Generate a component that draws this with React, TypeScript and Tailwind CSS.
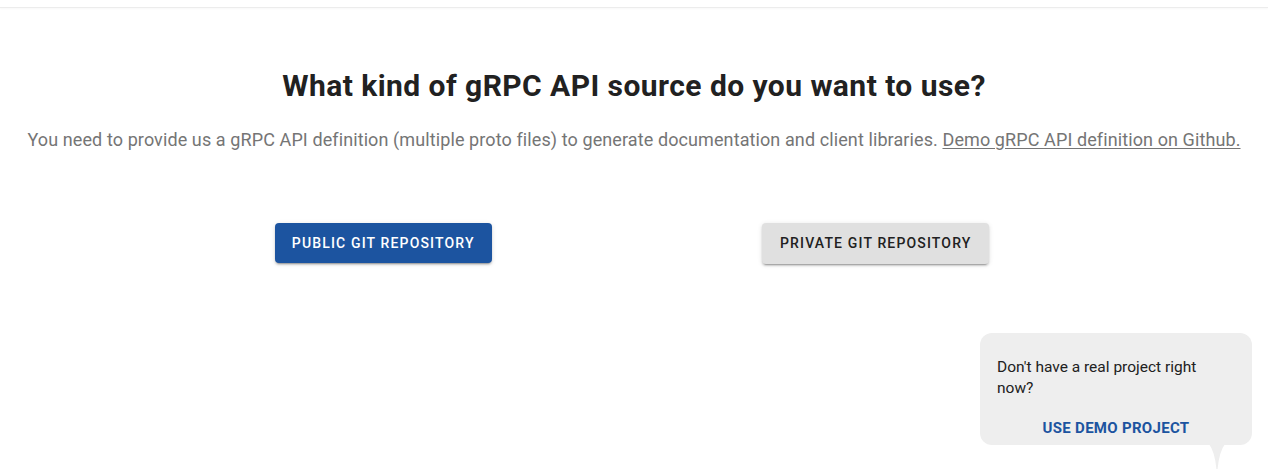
export default function App() {
  return (
    <div className="relative h-[469px] w-[1268px] overflow-hidden bg-white font-['Roboto',sans-serif]">
      {/* top bar edge */}
      <div className="h-[8px] border-b border-[#ececec] shadow-[0_1px_2px_rgba(0,0,0,0.03)]" />

      <div className="pt-[60px] text-center">
        <h1 className="text-[30px] font-bold leading-[36px] tracking-[0.45px] text-[#212121]">What kind of gRPC API source do you want to use?</h1>
        <p className="mt-[22px] text-[18px] leading-[28px] tracking-[0.1px] text-[#757575]">
          You need to provide us a gRPC API definition (multiple proto files) to generate documentation and client libraries.{' '}
          <a href="#" className="underline underline-offset-2">Demo gRPC API definition on Github.</a>
        </p>
      </div>

      <div className="ml-[137px] mt-[69px] grid w-[985px] grid-cols-2">
        <div className="flex justify-center">
          <button className="h-[40px] rounded-[4px] bg-[#1c54a0] px-[17px] text-[14px] font-medium uppercase tracking-[1.15px] text-white shadow-[0_3px_1px_-2px_rgba(0,0,0,0.2),0_2px_2px_0_rgba(0,0,0,0.14),0_1px_5px_0_rgba(0,0,0,0.12)]">
            Public Git Repository
          </button>
        </div>
        <div className="flex justify-center">
          <button className="h-[41px] rounded-[4px] bg-[#e0e0e0] px-[18px] text-[14px] font-medium uppercase tracking-[1.15px] text-[#212121] shadow-[0_3px_1px_-2px_rgba(0,0,0,0.2),0_2px_2px_0_rgba(0,0,0,0.14),0_1px_5px_0_rgba(0,0,0,0.12)]">
            Private Git Repository
          </button>
        </div>
      </div>

      {/* demo project bubble */}
      <div className="absolute left-[980px] top-[333px] h-[112px] w-[272px] rounded-[12px] bg-[#eeeeee] px-[17px] pt-[24px]">
        <p className="w-[225px] text-[15.5px] leading-[21px] text-[#212121]">Don't have a real project right now?</p>
        <button className="mt-[19px] block w-full text-center text-[15px] font-bold uppercase leading-[20px] tracking-[0.3px] text-[#1c54a0]">
          Use demo project
        </button>
        <svg className="absolute left-[229px] top-[111px]" width="16" height="26" viewBox="0 0 16 26">
          <path d="M0 0 H16 Q10 8 8.5 26 H7.5 Q6 8 0 0 Z" fill="#eeeeee" />
        </svg>
      </div>
    </div>
  )
}
